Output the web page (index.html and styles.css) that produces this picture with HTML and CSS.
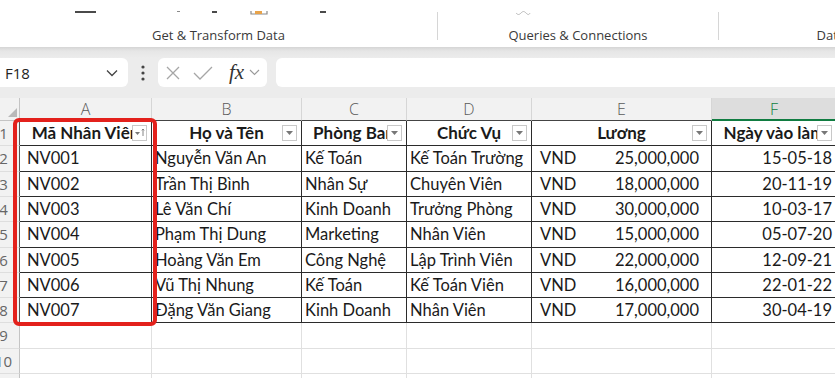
FILE: index.html
```html
<!DOCTYPE html>
<html lang="vi">
<head>
    <meta charset="UTF-8">
    <meta name="viewport" content="width=device-width, initial-scale=1.0">
    <title>Danh sách nhân viên</title>
    <link rel="stylesheet" href="styles.css">
</head>
<body>
<div class="ribbon">
    <div class="group g1">
        <div class="icons">
            <span class="mark m1"></span>
            <span class="mark m2"></span>
            <span class="mark m3"></span>
            <svg class="m4" width="18" height="6" viewBox="0 0 18 6"><path d="M1 1v3h16V1" fill="none" stroke="#8a8a8a" stroke-width="1.2"/><rect x="5" y="1" width="7" height="3" fill="#e8a34a"/></svg>
            <span class="mark m5"></span>
        </div>
        <div class="label">Get &amp; Transform Data</div>
    </div>
    <div class="sep"></div>
    <div class="group g2">
        <div class="icons">
            <svg class="m6" width="16" height="5" viewBox="0 0 16 5"><path d="M1 2c2 2 3 2 5 0s3-2 5 0 3 2 4 0" fill="none" stroke="#b8b8b8" stroke-width="1"/></svg>
        </div>
        <div class="label">Queries &amp; Connections</div>
    </div>
    <div class="sep"></div>
    <div class="group g3">
        <div class="icons"></div>
        <div class="label">Data Types</div>
    </div>
</div>

<div class="formula-area">
    <div class="namebox">
        <span>F18</span>
        <svg width="12" height="8" viewBox="0 0 12 8"><path d="M1 1.5l5 5 5-5" fill="none" stroke="#444" stroke-width="1.3"/></svg>
    </div>
    <div class="dots">
        <svg width="4" height="16" viewBox="0 0 4 16"><circle cx="2" cy="2" r="1.6" fill="#444"/><circle cx="2" cy="8" r="1.6" fill="#444"/><circle cx="2" cy="14" r="1.6" fill="#444"/></svg>
    </div>
    <div class="fxbox">
        <svg width="14" height="14" viewBox="0 0 14 14"><path d="M1 1l12 12M13 1L1 13" stroke="#a6a6a6" stroke-width="1.3"/></svg>
        <svg width="20" height="14" viewBox="0 0 20 14"><path d="M1 7l6 6L19 1" fill="none" stroke="#a6a6a6" stroke-width="1.3"/></svg>
        <span class="fx">fx</span>
        <svg width="11" height="7" viewBox="0 0 11 7"><path d="M1 1l4.5 4.5L10 1" fill="none" stroke="#9a9a9a" stroke-width="1.1"/></svg>
    </div>
    <div class="finput"></div>
</div>

<div class="sheet">
    <div class="grid">
        <div class="ch corner"><span class="tri"></span></div>
        <div class="ch">A</div>
        <div class="ch">B</div>
        <div class="ch">C</div>
        <div class="ch">D</div>
        <div class="ch">E</div>
        <div class="ch sel">F</div>

        <div class="rh t">1</div>
        <div class="c t th">Mã Nhân Viên<span class="fbtn"><svg width="11" height="10" viewBox="0 0 11 10"><path d="M1 4h5L3.5 7z" fill="#777"/><path d="M9 1v7M7.8 2.4L9 1l1.2 1.4" fill="none" stroke="#777" stroke-width="0.9"/></svg></span></div>
        <div class="c t th">Họ và Tên<span class="fbtn"><svg width="7" height="4" viewBox="0 0 7 4"><path d="M0 0h7L3.5 4z" fill="#777"/></svg></span></div>
        <div class="c t th">Phòng Ban<span class="fbtn"><svg width="7" height="4" viewBox="0 0 7 4"><path d="M0 0h7L3.5 4z" fill="#777"/></svg></span></div>
        <div class="c t th">Chức Vụ<span class="fbtn"><svg width="7" height="4" viewBox="0 0 7 4"><path d="M0 0h7L3.5 4z" fill="#777"/></svg></span></div>
        <div class="c t th">Lương<span class="fbtn"><svg width="7" height="4" viewBox="0 0 7 4"><path d="M0 0h7L3.5 4z" fill="#777"/></svg></span></div>
        <div class="c t th">Ngày vào làm<span class="fbtn"><svg width="7" height="4" viewBox="0 0 7 4"><path d="M0 0h7L3.5 4z" fill="#777"/></svg></span></div>

        <div class="rh t">2</div>
        <div class="c t id">NV001</div>
        <div class="c t">Nguyễn Văn An</div>
        <div class="c t">Kế Toán</div>
        <div class="c t">Kế Toán Trường</div>
        <div class="c t money"><span>VND</span><span>25,000,000</span></div>
        <div class="c t date">15-05-18</div>

        <div class="rh t">3</div>
        <div class="c t id">NV002</div>
        <div class="c t">Trần Thị Bình</div>
        <div class="c t">Nhân Sự</div>
        <div class="c t">Chuyên Viên</div>
        <div class="c t money"><span>VND</span><span>18,000,000</span></div>
        <div class="c t date">20-11-19</div>

        <div class="rh t">4</div>
        <div class="c t id">NV003</div>
        <div class="c t">Lê Văn Chí</div>
        <div class="c t">Kinh Doanh</div>
        <div class="c t">Trưởng Phòng</div>
        <div class="c t money"><span>VND</span><span>30,000,000</span></div>
        <div class="c t date">10-03-17</div>

        <div class="rh t">5</div>
        <div class="c t id">NV004</div>
        <div class="c t">Phạm Thị Dung</div>
        <div class="c t">Marketing</div>
        <div class="c t">Nhân Viên</div>
        <div class="c t money"><span>VND</span><span>15,000,000</span></div>
        <div class="c t date">05-07-20</div>

        <div class="rh t">6</div>
        <div class="c t id">NV005</div>
        <div class="c t">Hoàng Văn Em</div>
        <div class="c t">Công Nghệ</div>
        <div class="c t">Lập Trình Viên</div>
        <div class="c t money"><span>VND</span><span>22,000,000</span></div>
        <div class="c t date">12-09-21</div>

        <div class="rh t">7</div>
        <div class="c t id">NV006</div>
        <div class="c t">Vũ Thị Nhung</div>
        <div class="c t">Kế Toán</div>
        <div class="c t">Kế Toán Viên</div>
        <div class="c t money"><span>VND</span><span>16,000,000</span></div>
        <div class="c t date">22-01-22</div>

        <div class="rh t">8</div>
        <div class="c t id">NV007</div>
        <div class="c t">Đặng Văn Giang</div>
        <div class="c t">Kinh Doanh</div>
        <div class="c t">Nhân Viên</div>
        <div class="c t money"><span>VND</span><span>17,000,000</span></div>
        <div class="c t date">30-04-19</div>

        <div class="rh">9</div>
        <div class="c"></div><div class="c"></div><div class="c"></div><div class="c"></div><div class="c"></div><div class="c"></div>

        <div class="rh">10</div>
        <div class="c"></div><div class="c"></div><div class="c"></div><div class="c"></div><div class="c"></div><div class="c"></div>

        <div class="rh">11</div>
        <div class="c"></div><div class="c"></div><div class="c"></div><div class="c"></div><div class="c"></div><div class="c"></div>
    </div>
    <div class="highlight"></div>
</div>
</body>
</html>
```

FILE: styles.css
```css
* {
    box-sizing: border-box;
}
body {
    margin: 0;
    width: 835px;
    height: 378px;
    overflow: hidden;
    background: #fff;
    font-family: Lato, "Noto Sans", sans-serif;
}

/* ribbon remains */
.ribbon {
    display: flex;
    height: 47px;
    background: #fff;
}
.group {
    display: flex;
    flex-direction: column;
    flex-shrink: 0;
}
.g1 {
    width: 437px;
}
.g2 {
    width: 280px;
}
.g3 {
    width: 262px;
}
.icons {
    display: flex;
    align-items: flex-start;
    height: 27px;
    padding-top: 10px;
}
.label {
    text-align: center;
    font-family: "Open Sans", "Noto Sans", sans-serif;
    font-size: 13px;
    color: #3a3a3a;
    line-height: 16px;
}
.sep {
    width: 1px;
    height: 28px;
    margin-top: 12px;
    background: #d6d6d6;
    flex-shrink: 0;
}
.mark {
    display: block;
    height: 2px;
    margin-top: 1px;
    background: #4a4a4a;
}
.m1 {
    width: 21px;
    margin-left: 75px;
}
.m2 {
    width: 3px;
    height: 1px;
    margin-left: 81px;
    background: #8a8a8a;
}
.m3 {
    width: 5px;
    margin-left: 32px;
}
.m4 {
    margin-left: 33px;
}
.m5 {
    width: 6px;
    margin-left: 52px;
}
.m6 {
    margin-left: 77px;
    margin-top: 1px;
}

/* formula bar */
.formula-area {
    display: flex;
    align-items: center;
    height: 51px;
    padding: 11px 0;
    background: linear-gradient(#d5d5d5 0, #e6e6e6 4px, #ececec 11px, #ececec 100%);
}
.namebox {
    width: 133px;
    height: 29px;
    margin-left: -5px;
    padding: 0 10px;
    display: flex;
    align-items: center;
    justify-content: space-between;
    background: #fff;
    border-radius: 6px;
    font-family: "Open Sans", "Noto Sans", sans-serif;
    font-size: 15px;
    color: #222;
}
.dots {
    width: 30px;
    display: flex;
    justify-content: center;
}
.fxbox {
    width: 109px;
    height: 29px;
    display: flex;
    align-items: center;
    padding: 0 4px 0 8px;
    background: #fff;
    border-radius: 6px;
}
.fxbox svg:nth-child(2) {
    margin-left: 13px;
}
.fx {
    margin-left: 16px;
    margin-right: 5px;
    font-family: "Liberation Serif", serif;
    font-style: italic;
    font-size: 21px;
    color: #333;
    line-height: 29px;
}
.finput {
    flex: 1;
    height: 29px;
    margin-left: 9px;
    background: #fff;
    border-radius: 6px 0 0 6px;
}

/* sheet */
.sheet {
    position: relative;
}
.grid {
    display: grid;
    grid-template-columns: 32px 132px 150px 105px 125px 180px 125px;
    grid-template-rows: 23px 25px 26px 25px 25px 26px 25px 25px 25px 26px 25px 25px;
    margin-left: -12px;
}
.ch {
    background: #f2f2f2;
    border-right: 1px solid #d6d6d6;
    border-bottom: 1px solid #444;
    text-align: center;
    font-family: "Open Sans", "Noto Sans", sans-serif;
    font-weight: 300;
    font-size: 16px;
    line-height: 22px;
    color: #5a5a5a;
}
.ch.corner {
    display: flex;
    justify-content: flex-end;
    align-items: flex-end;
    padding: 0 2px 3px 0;
    border-bottom-color: #c4c4c4;
    border-right-color: #c4c4c4;
}
.tri {
    width: 0;
    height: 0;
    border-left: 9px solid transparent;
    border-bottom: 9px solid #b9b9b9;
}
.ch.sel {
    background: #dddddd;
    color: #107c41;
    border-bottom: 2px solid #107c41;
}
.rh {
    background: #f2f2f2;
    border-right: 1px solid #c4c4c4;
    border-bottom: 1px solid #dedede;
    text-align: center;
    font-family: "Open Sans", "Noto Sans", sans-serif;
    font-size: 15px;
    line-height: 25px;
    color: #666;
}
.rh.t {
    border-right-color: #555;
}
.c {
    border-right: 1px solid #e0e0e0;
    border-bottom: 1px solid #e0e0e0;
    padding: 0 3px;
    white-space: nowrap;
    overflow: hidden;
    font-size: 16.5px;
    line-height: 24px;
    color: #1a1a1a;
}
.c.t {
    border-right-color: #2b2b2b;
    border-bottom-color: #2b2b2b;
}
.th {
    position: relative;
    text-align: center;
    font-weight: 700;
    font-size: 17px;
}
.fbtn {
    position: absolute;
    right: 4px;
    top: 4px;
    width: 15px;
    height: 16px;
    display: flex;
    align-items: center;
    justify-content: center;
    background: #fff;
    border: 1px solid #c8c8c8;
}
.id {
    padding-left: 7px;
}
.money {
    display: flex;
    justify-content: space-between;
    padding: 0 12px 0 8px;
}
.date {
    text-align: right;
    padding-right: 4px;
}
.highlight {
    position: absolute;
    left: 13px;
    top: 20px;
    width: 144px;
    height: 208px;
    border: 4px solid #e3211c;
    border-radius: 6px;
}
```
